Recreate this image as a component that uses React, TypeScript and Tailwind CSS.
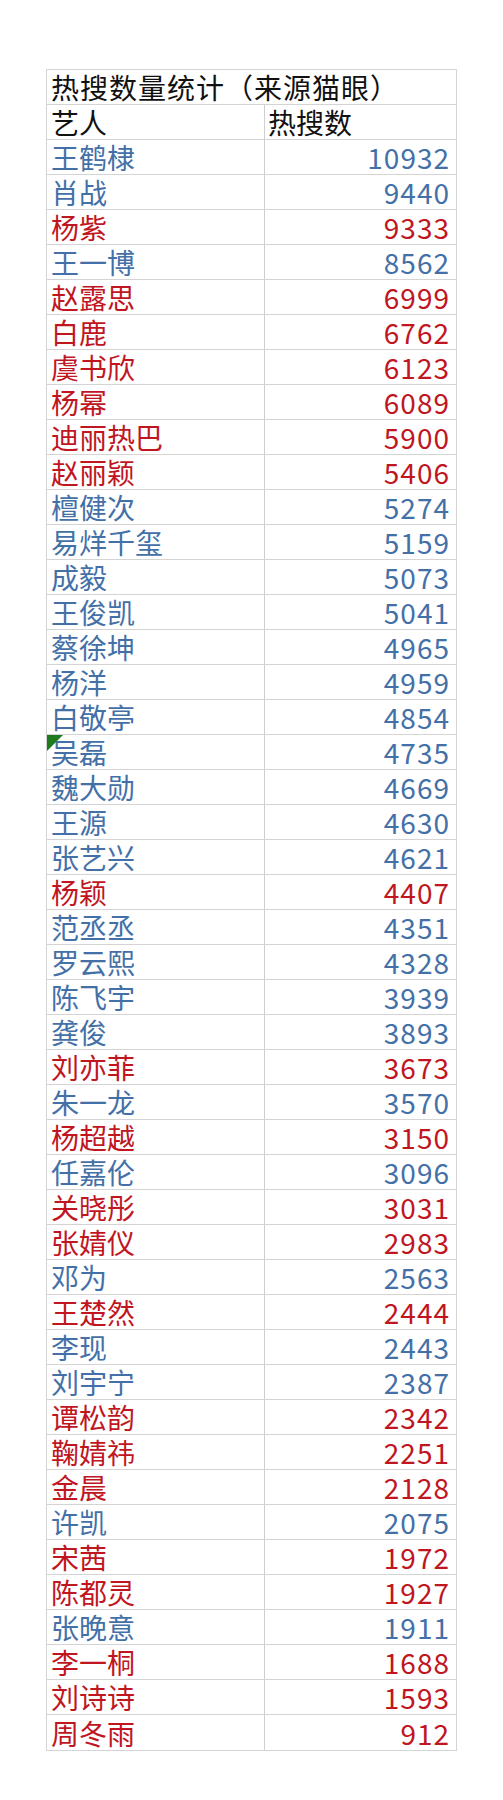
const rows: [string, number, "m" | "f"][] = [
  ["王鹤棣", 10932, "m"],
  ["肖战", 9440, "m"],
  ["杨紫", 9333, "f"],
  ["王一博", 8562, "m"],
  ["赵露思", 6999, "f"],
  ["白鹿", 6762, "f"],
  ["虞书欣", 6123, "f"],
  ["杨幂", 6089, "f"],
  ["迪丽热巴", 5900, "f"],
  ["赵丽颖", 5406, "f"],
  ["檀健次", 5274, "m"],
  ["易烊千玺", 5159, "m"],
  ["成毅", 5073, "m"],
  ["王俊凯", 5041, "m"],
  ["蔡徐坤", 4965, "m"],
  ["杨洋", 4959, "m"],
  ["白敬亭", 4854, "m"],
  ["吴磊", 4735, "m"],
  ["魏大勋", 4669, "m"],
  ["王源", 4630, "m"],
  ["张艺兴", 4621, "m"],
  ["杨颖", 4407, "f"],
  ["范丞丞", 4351, "m"],
  ["罗云熙", 4328, "m"],
  ["陈飞宇", 3939, "m"],
  ["龚俊", 3893, "m"],
  ["刘亦菲", 3673, "f"],
  ["朱一龙", 3570, "m"],
  ["杨超越", 3150, "f"],
  ["任嘉伦", 3096, "m"],
  ["关晓彤", 3031, "f"],
  ["张婧仪", 2983, "f"],
  ["邓为", 2563, "m"],
  ["王楚然", 2444, "f"],
  ["李现", 2443, "m"],
  ["刘宇宁", 2387, "m"],
  ["谭松韵", 2342, "f"],
  ["鞠婧祎", 2251, "f"],
  ["金晨", 2128, "f"],
  ["许凯", 2075, "m"],
  ["宋茜", 1972, "f"],
  ["陈都灵", 1927, "f"],
  ["张晚意", 1911, "m"],
  ["李一桐", 1688, "f"],
  ["刘诗诗", 1593, "f"],
  ["周冬雨", 912, "f"],
];

export default function App() {
  return (
    <div
      className="w-[503px] h-[1800px] bg-white pt-[69px] pl-[46px]"
      style={{ fontFamily: '"Noto Sans CJK SC", "Noto Sans", sans-serif' }}
    >
      <div className="w-[411px] border border-[#d4d4d4] text-[28px] leading-none">
        <div className="h-[35px] flex items-center pl-[4px] text-[#111] border-b border-[#d4d4d4] tracking-[1px]">
          热搜数量统计（来源猫眼）
        </div>
        <div className="grid grid-cols-[218px_1fr] h-[35px] border-b border-[#d4d4d4] text-[#111]">
          <div className="flex items-center pl-[4px] border-r border-[#cfcfcf]">艺人</div>
          <div className="flex items-center pl-[3px]">热搜数</div>
        </div>
        {rows.map(([name, n, g], i) => (
          <div
            key={name}
            className={`grid grid-cols-[218px_1fr] h-[35px] ${
              i < rows.length - 1 ? "border-b border-[#d4d4d4]" : ""
            } ${g === "f" ? "text-[#c0161f]" : "text-[#4470a8]"}`}
          >
            <div className="relative flex items-center pl-[4px] border-r border-[#cfcfcf]">
              {name === "吴磊" && (
                <div className="absolute left-0 top-0 w-0 h-0 border-t-[16px] border-t-[#1e7b1e] border-r-[16px] border-r-transparent" />
              )}
              {name}
            </div>
            <div className="flex items-center justify-end pr-[6px] tracking-[1px]">{n}</div>
          </div>
        ))}
      </div>
    </div>
  );
}
